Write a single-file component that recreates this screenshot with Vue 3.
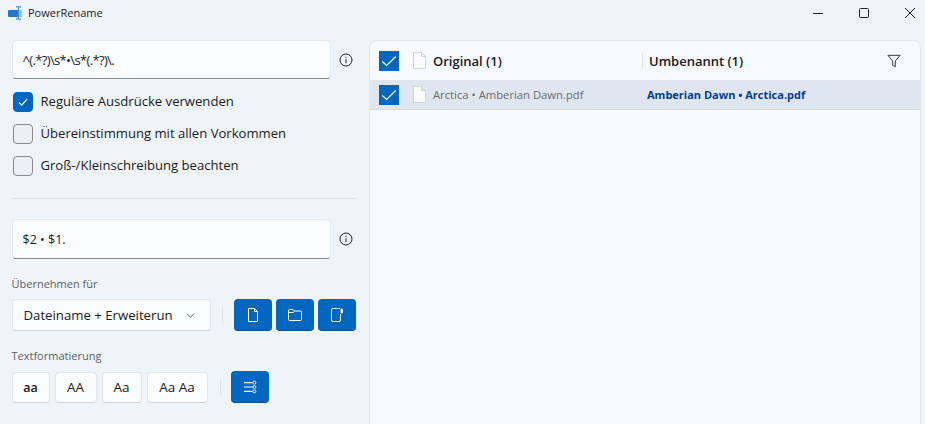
<script setup>
const options = [
  { label: 'Reguläre Ausdrücke verwenden', on: true },
  { label: 'Übereinstimmung mit allen Vorkommen', on: false },
  { label: 'Groß-/Kleinschreibung beachten', on: false },
]
const cases = [
  { t: 'aa', w: 38, bold: true },
  { t: 'AA', w: 42 },
  { t: 'Aa', w: 40 },
  { t: 'Aa Aa', w: 61 },
]
</script>

<template>
  <div class="app">
    <header class="titlebar">
      <svg class="logo" width="14" height="14" viewBox="0 0 14 14">
        <rect x="0" y="4" width="10" height="7" rx="1" fill="#1f78c8" />
        <rect x="11" y="4" width="3" height="7" fill="#8cc4ee" />
        <path d="M8 .8h5M10.500 .8v12.400M8 13.200h5" stroke="#2f9be6" stroke-width="1.200" fill="none" />
      </svg>
      <span class="title">PowerRename</span>
      <div class="winctl">
        <svg width="12" height="12" viewBox="0 0 12 12"><path d="M1 6.500h10" stroke="#222" /></svg>
        <svg width="12" height="12" viewBox="0 0 12 12"><rect x="1.500" y="1.500" width="9" height="9" rx="1" fill="none" stroke="#222" /></svg>
        <svg width="12" height="12" viewBox="0 0 12 12"><path d="M1 1l10 10M11 1L1 11" stroke="#222" /></svg>
      </div>
    </header>

    <main class="body">
      <section class="left">
        <div class="input-row">
          <div class="input regex">^(.*?)\s*•\s*(.*?)\.</div>
          <svg class="info" width="14" height="14" viewBox="0 0 14 14">
            <circle cx="7" cy="7" r="6" fill="none" stroke="#222" />
            <path d="M7 6.200v4M7 3.800v1.100" stroke="#222" />
          </svg>
        </div>

        <div class="checks">
          <label v-for="o in options" :key="o.label" class="check">
            <span class="box" :class="{ on: o.on }">
              <svg v-if="o.on" width="12" height="12" viewBox="0 0 12 12"><path d="M2 6.500l2.800 2.700L10 3.200" fill="none" stroke="#fff" stroke-width="1.200" /></svg>
            </span>
            <span class="check-text">{{ o.label }}</span>
          </label>
        </div>

        <div class="divider"></div>

        <div class="input-row">
          <div class="input replace">$2 • $1.</div>
          <svg class="info" width="14" height="14" viewBox="0 0 14 14">
            <circle cx="7" cy="7" r="6" fill="none" stroke="#222" />
            <path d="M7 6.200v4M7 3.800v1.100" stroke="#222" />
          </svg>
        </div>

        <div class="label apply-label">Übernehmen für</div>
        <div class="tool-row">
          <div class="select">
            <span>Dateiname + Erweiterun</span>
            <svg width="9" height="9" viewBox="0 0 10 10"><path d="M1 3l4 4 4-4" fill="none" stroke="#555" /></svg>
          </div>
          <span class="vsep apply-sep"></span>
          <div class="blue-group">
            <button class="blue">
              <svg width="16" height="16" viewBox="0 0 16 16" fill="none" stroke="#fff"><path d="M3.500 1.500h6l3 3v10h-9zM9.500 1.500v3h3" /></svg>
            </button>
            <button class="blue">
              <svg width="16" height="16" viewBox="0 0 16 16" fill="none" stroke="#fff"><path d="M1.500 3.500a1 1 0 0 1 1-1h3.500l1.500 1.500h6a1 1 0 0 1 1 1v7.500a1 1 0 0 1-1 1h-11a1 1 0 0 1-1-1zM1.500 5.500h5l1-1.500" /></svg>
            </button>
            <button class="blue">
              <svg width="16" height="16" viewBox="0 0 16 16" fill="none" stroke="#fff"><path d="M11 1.500h-7a1.500 1.500 0 0 0-1.500 1.500v10a1.500 1.500 0 0 0 1.500 1.500h6a1.500 1.500 0 0 0 1.500-1.500v-6" /><rect x="11.500" y="1.500" width="2.500" height="5" rx="1.250" fill="#fff" stroke="none" /></svg>
            </button>
          </div>
        </div>

        <div class="label format-label">Textformatierung</div>
        <div class="tool-row format-row">
          <button v-for="c in cases" :key="c.t" class="case" :class="{ bold: c.bold }" :style="{ width: c.w + 'px' }">{{ c.t }}</button>
          <span class="vsep format-sep"></span>
          <button class="blue tall">
            <svg width="14" height="14" viewBox="0 0 16 16" fill="none" stroke="#fff"><path d="M1 3h10M1 8h10M1 13h10" stroke-width="1.300" /><circle cx="13" cy="3" r="1.700" /><circle cx="13" cy="8" r="1.700" /><circle cx="13" cy="13" r="1.700" /></svg>
          </button>
        </div>
      </section>

      <section class="panel">
        <div class="head">
          <span class="square">
            <svg width="18" height="18" viewBox="0 0 16 16"><path d="M2 8.500l3.900 3.500L14 4" fill="none" stroke="#fff" stroke-width="1.100" /></svg>
          </span>
          <svg class="file" width="13" height="17" viewBox="0 0 13 17"><path d="M.5 .5h8l4 4v12h-12zM8.500 .5v4h4" fill="#fbfbfb" stroke="#d4d4d4" /></svg>
          <span class="col-orig">Original (1)</span>
          <span class="col-sep"></span>
          <span class="col-new">Umbenannt (1)</span>
          <svg class="filter" width="14" height="14" viewBox="0 0 16 16"><path d="M1 1.500h14L9.500 8v6.500l-3-1.500V8z" fill="none" stroke="#333" stroke-width="1.100" /></svg>
        </div>
        <div class="row">
          <span class="square">
            <svg width="18" height="18" viewBox="0 0 16 16"><path d="M2 8.500l3.900 3.500L14 4" fill="none" stroke="#fff" stroke-width="1.100" /></svg>
          </span>
          <svg class="file" width="13" height="17" viewBox="0 0 13 17"><path d="M.5 .5h8l4 4v12h-12zM8.500 .5v4h4" fill="#fbfbfb" stroke="#d4d4d4" /></svg>
          <span class="orig-name">Arctica • Amberian Dawn.pdf</span>
          <span class="new-name">Amberian Dawn • Arctica.pdf</span>
        </div>
      </section>
    </main>
  </div>
</template>

<style>
html, body { margin: 0; background: #eff4f9; }
</style>

<style scoped>
.app {
  width: 925px;
  height: 424px;
  overflow: hidden;
  background: #eff4f9;
  color: #1b1b1b;
  font-family: "Open Sans", "Liberation Sans", sans-serif;
  font-size: 13px;
  display: flex;
  flex-direction: column;
}
.titlebar {
  height: 25px;
  padding-left: 8px;
  display: flex;
  align-items: center;
  gap: 6px;
  flex: none;
}
.title { font-size: 11px; }
.winctl {
  margin-left: auto;
  padding-right: 9px;
  display: flex;
  gap: 34px;
}
.body { flex: 1; display: flex; padding-top: 15px; min-height: 0; }
.left { width: 344.500px; margin-left: 11.500px; margin-right: 13px; flex: none; }
.input-row { display: flex; align-items: center; gap: 8px; }
.input {
  width: 319.500px;
  height: 39px;
  box-sizing: border-box;
  padding-left: 10px;
  display: flex;
  align-items: center;
  background: #fbfcfe;
  border: 1px solid #e6e9ed;
  border-bottom: 1px solid #8a8a8a;
  border-radius: 4px;
  font-size: 12.500px;
}
.input.regex { font-size: 13px; letter-spacing: -0.65px; }
.input.replace { height: 40px; }
.checks { margin-top: 13px; display: flex; flex-direction: column; gap: 12px; padding-left: 1px; }
.check { display: flex; align-items: center; gap: 8px; height: 20px; font-size: 13.100px; }
.check-text { padding-bottom: 2px; }
.box {
  width: 20px; height: 20px; box-sizing: border-box;
  border: 1px solid #8b8b8b; border-radius: 4px; background: #eceff3;
  display: flex; align-items: center; justify-content: center;
}
.box.on { background: #0067c0; border-color: #0067c0; }
.divider { height: 1px; background: #dfe4e9; margin-top: 22px; margin-bottom: 20px; }
.label { color: #5c5f63; font-size: 11px; line-height: 16px; }
.apply-label { margin-top: 17px; }
.format-label { margin-top: 17px; }
.tool-row { display: flex; align-items: center; margin-top: 7px; }
.select {
  width: 199.500px; height: 32px; box-sizing: border-box;
  padding: 0 15px 0 11px;
  display: flex; align-items: center; justify-content: space-between;
  background: #fbfcfe; border: 1px solid #e3e6ea; border-bottom-color: #d0d3d7; border-radius: 4px;
  font-size: 13.200px; white-space: nowrap;
}
.vsep { width: 1px; height: 16px; background: #dfe3e8; flex: none; }
.apply-sep { margin: 0 11px; }
.blue-group { display: flex; gap: 4px; }
button { font-family: inherit; padding: 0; margin: 0; }
.blue {
  width: 38px; height: 32px;
  background: #0067c0; border: none; border-bottom: 1px solid #00549c; border-radius: 4px;
  display: flex; align-items: center; justify-content: center;
}
.format-row { gap: 5px; margin-top: 7px; }
.format-row .format-sep { margin-left: 7px; margin-right: 5.500px; }
.case {
  height: 31px; background: #fbfcfe;
  border: 1px solid #e3e6ea; border-bottom-color: #d0d3d7; border-radius: 4px;
  color: #1b1b1b; font-size: 13.500px;
}
.case.bold { font-weight: 600; font-size: 12.500px; }
.panel {
  width: 551.500px; height: 400px; box-sizing: border-box; flex: none;
  background: #f6f9fd;
  border: 1px solid #e4e8ec; border-radius: 8px 8px 0 0;
  overflow: hidden;
}
.head, .row { display: flex; align-items: center; padding-left: 9px; }
.head { height: 39px; }
.row { height: 29px; background: #dfe6ef; border-bottom: 1px solid #d4dbe4; }
.square {
  width: 20px; height: 20px; background: #0067c0; flex: none;
  display: flex; align-items: center; justify-content: center;
}
.file { margin-left: 14px; flex: none; }
.col-orig { margin-left: 7px; width: 209px; font-weight: 600; font-size: 13px; }
.col-sep { width: 1px; height: 16px; background: #e1e5ea; }
.col-new { margin-left: 6px; font-weight: 600; font-size: 13px; }
.filter { margin-left: auto; margin-right: 18.500px; }
.orig-name { margin-left: 7px; width: 214px; font-size: 11.250px; color: #6a6d70; white-space: nowrap; }
.new-name { font-size: 11px; font-weight: 700; color: #003e92; white-space: nowrap; }
</style>
